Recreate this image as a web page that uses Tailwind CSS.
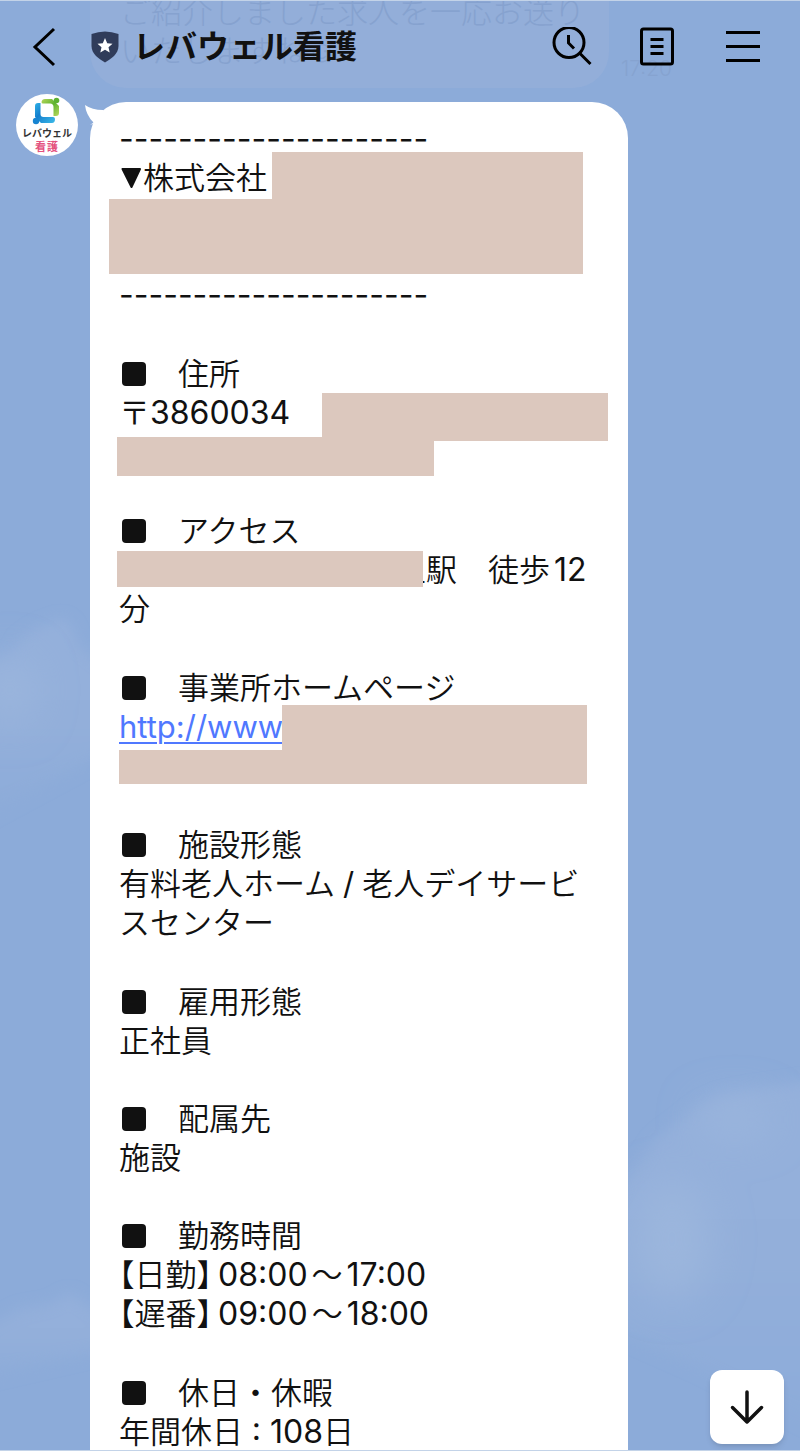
<!DOCTYPE html>
<html lang="ja">
<head>
  <meta charset="UTF-8">
  <meta name="viewport" content="width=device-width, initial-scale=1.0">
  <title>レバウェル看護</title>
  <script src="https://cdn.jsdelivr.net/npm/@tailwindcss/browser@4"></script>
</head>
<body class="bg-[#8cabd9] font-['Inter','Noto_Sans_CJK_JP',sans-serif] text-[#111]">
  <div class="relative h-screen overflow-hidden border-y border-[#c3d3e8]">

    <!-- clouds -->
    <svg class="absolute inset-0 w-full h-full" viewBox="0 0 800 1451" preserveAspectRatio="none" aria-hidden="true">
      <defs>
        <filter id="soft" x="-30%" y="-30%" width="160%" height="160%"><feGaussianBlur stdDeviation="7" /></filter>
        <filter id="softer" x="-80%" y="-80%" width="260%" height="260%"><feGaussianBlur stdDeviation="20" /></filter>
        <linearGradient id="fade" x1="0" y1="0" x2="0" y2="1">
          <stop offset="0" stop-color="#94b0db" />
          <stop offset="0.500" stop-color="#93afda" />
          <stop offset="1" stop-color="#8cabd9" />
        </linearGradient>
      </defs>
      <g fill="url(#fade)" filter="url(#soft)">
        <path d="M-20 665 L12 655 L20 640 L36 628 L62 618 L72 626 L78 645 L90 655 L110 670 L110 750 L-20 820 Z" />
        <path d="M-20 1330 L20 1310 L50 1305 L70 1294 L84 1304 L110 1320 L110 1350 L-20 1380 Z" />
        <path d="M610 1200 L635 1170 L655 1140 L675 1125 L700 1105 L720 1096 L750 1090 L820 1080 L820 1430 L700 1370 L610 1330 Z" />
      </g>
      <g fill="#9bb6dd" filter="url(#softer)">
        <ellipse cx="735" cy="1120" rx="36" ry="18" />
        <ellipse cx="672" cy="1240" rx="38" ry="60" />
        <ellipse cx="10" cy="690" rx="24" ry="34" />
      </g>
    </svg>

    <!-- earlier message, scrolled under the header -->
    <div class="relative flex items-end pl-[90px] h-[87px]">
      <p class="shrink-0 w-[519px] rounded-b-[36px] bg-[#93aed9] pl-[30px] pb-[18px] text-[31px] leading-[39px] font-light text-[#86a2cf]">ご紹介しました求人を一応お送り<br>いたしますね☺</p>
      <time class="ml-3 pb-1 text-[21px] font-light text-[#86a3d0]">17:20</time>
    </div>

    <header class="absolute inset-x-0 top-0 flex items-center h-[91px] pl-[31px] pr-10">
      <button type="button" aria-label="戻る" class="mr-[34px]">
        <svg class="block w-[26px] h-10" viewBox="0 0 26 40" fill="none" stroke="#000" stroke-width="3"><path d="M23 2 L4 20 L23 38" /></svg>
      </button>
      <svg class="w-7 h-8 mr-[14px]" viewBox="0 0 28 32" aria-hidden="true">
        <path d="M0.500 3 Q14 -2 27.500 3 V15 C27.500 23 20 28 14 31.500 C8 28 0.500 23 0.500 15 Z" fill="#303c5a" />
        <path d="M14 7 L16.200 12.200 L21.500 12.700 L17.500 16.300 L18.700 21.500 L14 18.800 L9.300 21.500 L10.500 16.300 L6.500 12.700 L11.800 12.200 Z" fill="#fff" />
      </svg>
      <h1 class="flex-1 text-[32px] font-bold whitespace-nowrap">レバウェル看護</h1>
      <nav class="flex items-center">
        <button type="button" aria-label="検索" class="mr-12">
          <svg class="block w-10 h-10" viewBox="0 0 40 40" fill="none" stroke="#000" stroke-width="3"><circle cx="17" cy="15.500" r="15" /><path d="M28 26.500 L38.500 37 M16.500 8 V16 L22 21.500" /></svg>
        </button>
        <button type="button" aria-label="ノート" class="mr-[52px]">
          <svg class="block w-[34px] h-10" viewBox="0 0 34 40" fill="none" stroke="#000" stroke-width="3"><rect x="1.500" y="2" width="31" height="35" rx="2" /><path d="M10.500 12.500 H23.500 M10.500 19.500 H23.500 M10.500 26.500 H23.500" /></svg>
        </button>
        <button type="button" aria-label="メニュー">
          <svg class="block w-[34px] h-10" viewBox="0 0 34 40" fill="none" stroke="#000" stroke-width="3"><path d="M0 5.500 H34 M0 19.500 H34 M0 33.500 H34" /></svg>
        </button>
      </nav>
    </header>

    <main class="relative flex items-start gap-3 pl-4 pr-[172px] pt-1.5">
      <svg class="shrink-0 w-[62px] h-[62px]" viewBox="0 0 62 62" role="img" aria-label="レバウェル看護">
        <defs>
          <linearGradient id="blue" x1="0" y1="0" x2="1" y2="1"><stop offset="0" stop-color="#2fb0e6" /><stop offset="0.400" stop-color="#147fce" /><stop offset="1" stop-color="#3dbbe8" /></linearGradient>
          <linearGradient id="green" x1="0" y1="0" x2="1" y2="1"><stop offset="0" stop-color="#b3d65a" /><stop offset="0.500" stop-color="#5fb32f" /><stop offset="1" stop-color="#b9d95f" /></linearGradient>
        </defs>
        <circle cx="31" cy="31" r="31" fill="#fff" />
        <path d="M19 12 Q19 9 22 9 H24.500 V20 Q24.500 23 27.500 23 H37 Q39 23 39 25 Q39 29 36 29 H25 L19 23 Z" fill="url(#blue)" />
        <circle cx="20" cy="27" r="3.200" fill="#1784d1" />
        <path d="M25.500 8 Q26 5 29 5 H36 L43 12 V19 Q43 22 40 22 H37.500 V13 Q37.500 9.500 34 9.500 H27 Q25.500 9.500 25.500 8 Z" fill="url(#green)" />
        <circle cx="40.500" cy="6.500" r="2.800" fill="#5cb130" />
        <text x="31" y="43" text-anchor="middle" font-size="10" font-weight="700" fill="#333" font-family="Noto Sans CJK JP, sans-serif">レバウェル</text>
        <text x="19" y="57" font-size="11" font-weight="700" fill="#e4527f" font-family="Noto Sans CJK JP, sans-serif">看</text>
        <text x="31" y="57" font-size="11" font-weight="700" fill="#e4527f" font-family="Noto Sans CJK JP, sans-serif">護</text>
      </svg>

      <article class="relative flex-1 mt-2 h-[1400px] rounded-[36px] bg-white pl-[29px] pt-[17px] text-[31px] leading-[39px] font-[350] whitespace-nowrap">
        <svg class="absolute -left-[5px] top-[3px] w-6 h-5" viewBox="0 0 24 20" aria-hidden="true"><path d="M0 0 Q7 5 18 5 L24 12 L5 20 L8.500 17.500 Q1 10 0 0 Z" fill="#fff" /></svg>

        <section class="relative mb-10">
          <p class="text-[32px] font-normal">---------------------</p>
          <p class="flex items-center">
            <svg class="w-6 h-6" viewBox="0 0 24 24" role="img" aria-label="▼"><path d="M3.500 3 H21 L12.500 21 Z" fill="#111" stroke="#111" stroke-width="2" stroke-linejoin="round" /></svg>株式会社
          </p>
          <p>&nbsp;</p>
          <p>&nbsp;</p>
          <p class="text-[32px] font-normal">---------------------</p>
          <span class="absolute left-[153px] top-[33px] w-[311px] h-12 bg-[#dcc8be]"></span>
          <span class="absolute -left-[10px] top-20 w-[474px] h-[75px] bg-[#dcc8be]"></span>
        </section>

        <section class="relative mb-10">
          <h2 class="flex items-center gap-8"><span class="ml-[3px] w-6 h-6 rounded-[4px] bg-[#111]"></span>住所</h2>
          <p>〒<span class="text-[32px] font-normal">3860034</span></p>
          <p>&nbsp;</p>
          <span class="absolute left-[203px] top-[39px] w-[286px] h-12 bg-[#dcc8be]"></span>
          <span class="absolute -left-0.5 top-[83px] w-[317px] h-[39px] bg-[#dcc8be]"></span>
        </section>

        <section class="relative mb-10">
          <h2 class="flex items-center gap-8"><span class="ml-[3px] w-6 h-6 rounded-[4px] bg-[#111]"></span>アクセス</h2>
          <p class="pl-[276px]">上駅　徒歩<span class="ml-1 text-[32px] font-normal">12</span></p>
          <p>分</p>
          <span class="absolute -left-0.5 top-10 w-[306px] h-9 bg-[#dcc8be]"></span>
        </section>

        <section class="relative mb-10">
          <h2 class="flex items-center gap-8"><span class="ml-[3px] w-6 h-6 rounded-[4px] bg-[#111]"></span>事業所ホームページ</h2>
          <p><a href="#" class="font-normal text-[#5078ff] underline decoration-2 underline-offset-4">http://www</a></p>
          <p>&nbsp;</p>
          <span class="absolute left-[163px] top-[37px] w-[305px] h-[79px] bg-[#dcc8be]"></span>
          <span class="absolute left-0 top-[82px] w-[163px] h-[34px] bg-[#dcc8be]"></span>
        </section>

        <section class="mb-10">
          <h2 class="flex items-center gap-8"><span class="ml-[3px] w-6 h-6 rounded-[4px] bg-[#111]"></span>施設形態</h2>
          <p>有料老人ホーム<span class="mx-2 font-normal">/</span>老人デイサービ<br>スセンター</p>
        </section>

        <section class="mb-[39px]">
          <h2 class="flex items-center gap-8"><span class="ml-[3px] w-6 h-6 rounded-[4px] bg-[#111]"></span>雇用形態</h2>
          <p>正社員</p>
        </section>

        <section class="mb-[39px]">
          <h2 class="flex items-center gap-8"><span class="ml-[3px] w-6 h-6 rounded-[4px] bg-[#111]"></span>配属先</h2>
          <p>施設</p>
        </section>

        <section class="mb-10">
          <h2 class="flex items-center gap-8"><span class="ml-[3px] w-6 h-6 rounded-[4px] bg-[#111]"></span>勤務時間</h2>
          <p><span class="[font-feature-settings:'halt']">【日勤】</span><span class="ml-1.5 text-[32px] font-normal">08:00</span><span class="mx-1">〜</span><span class="text-[32px] font-normal">17:00</span></p>
          <p><span class="[font-feature-settings:'halt']">【遅番】</span><span class="ml-1.5 text-[32px] font-normal">09:00</span><span class="mx-1">〜</span><span class="text-[32px] font-normal">18:00</span></p>
        </section>

        <section>
          <h2 class="flex items-center gap-8"><span class="ml-[3px] w-6 h-6 rounded-[4px] bg-[#111]"></span>休日・休暇</h2>
          <p>年間休日 <span class="text-[32px] font-normal">: 108</span>日</p>
        </section>
      </article>
    </main>

    <button type="button" aria-label="最新のメッセージへ" class="absolute right-4 bottom-1.5 flex items-center justify-center w-[74px] h-[74px] rounded-xl bg-white shadow-md">
      <svg class="w-9 h-9" viewBox="0 0 36 36" fill="none" stroke="#111" stroke-width="3.500" stroke-linecap="round" stroke-linejoin="round"><path d="M18 3 V33 M3.500 18.500 L18 33 L32.500 18.500" /></svg>
    </button>
  </div>
</body>
</html>
